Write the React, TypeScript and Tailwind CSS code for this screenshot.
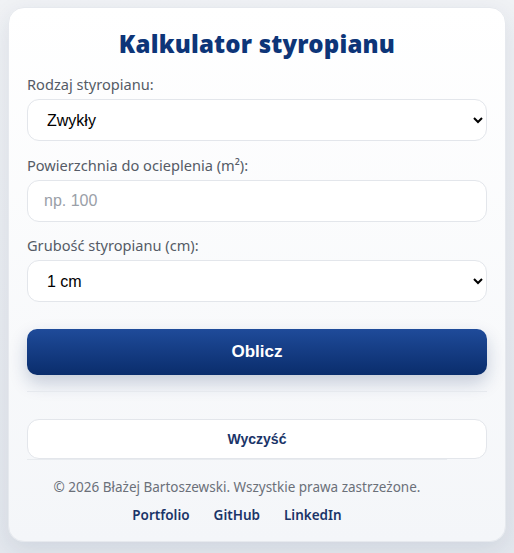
import React from 'react'

const sans = { fontFamily: '"Noto Sans", "Open Sans", sans-serif' }
const arial = { fontFamily: '"Liberation Sans", Arial, sans-serif' }

export default function App() {
  return (
    <div className="min-h-screen bg-gradient-to-b from-[#f0f2f5] to-[#e4e8ee] px-[8px] pt-[7px] pb-[13px]">
      <div
        className="rounded-[16px] bg-gradient-to-b from-white to-[#f4f6f9] px-[18px] pt-[20px] pb-[16px] shadow-[0_8px_24px_rgba(30,50,90,0.10)] border border-[#e6e9ee]"
        style={sans}
      >
        <h1 className="text-center text-[24px] leading-[32px] font-black text-[#0d3578] tracking-[0.2px]">
          Kalkulator styropianu
        </h1>

        <label className="mt-[14px] block text-[14.6px] leading-[20px] text-[#555b66]">Rodzaj styropianu:</label>
        <select
          defaultValue="zwykly"
          className="mt-[5px] block h-[42px] w-full rounded-[12px] border border-[#e3e6eb] bg-white pl-[15px] pr-[6px] text-[16px] text-black outline-none"
          style={arial}
        >
          <option value="zwykly">Zwykły</option>
          <option value="grafitowy">Grafitowy</option>
        </select>

        <label className="mt-[14px] block text-[14.6px] leading-[20px] text-[#555b66]">
          Powierzchnia do ocieplenia (m²):
        </label>
        <input
          type="number"
          placeholder="np. 100"
          className="mt-[5px] block h-[42px] w-full rounded-[12px] border border-[#e3e6eb] bg-white px-[16px] text-[16px] text-black outline-none placeholder:text-[#9aa0a8]"
          style={arial}
        />

        <label className="mt-[13px] block text-[14.6px] leading-[20px] text-[#555b66]">Grubość styropianu (cm):</label>
        <select
          defaultValue="1"
          className="mt-[5px] block h-[42px] w-full rounded-[12px] border border-[#e3e6eb] bg-white pl-[15px] pr-[6px] text-[16px] text-black outline-none"
          style={arial}
        >
          <option value="1">1 cm</option>
          <option value="2">2 cm</option>
          <option value="5">5 cm</option>
          <option value="10">10 cm</option>
        </select>

        <button
          className="mt-[27px] block h-[46px] w-full rounded-[10px] bg-gradient-to-b from-[#1f4b9a] to-[#0a2d6c] text-[17px] font-bold text-white shadow-[0_8px_18px_rgba(20,45,100,0.22)]"
          style={arial}
        >
          Oblicz
        </button>

        <div className="mt-[16px] h-px w-full bg-[#e6e9ee]" />

        <button
          className="mt-[27px] block h-[40px] w-full rounded-[12px] border border-[#e3e6eb] bg-white text-[14px] font-bold text-[#1a3468]"
          style={arial}
        >
          Wyczyść
        </button>

        <footer className="w-[420px] border-t border-[#e8ebef] pt-[17px]">
          <p className="text-center text-[13.5px] leading-[20px] text-[#6b7079]">
            © 2026 Błażej Bartoszewski. Wszystkie prawa zastrzeżone.
          </p>
          <div className="mt-[8px] flex justify-center gap-[24px] text-[13.5px] leading-[20px] font-semibold text-[#1a3468]">
            <a href="#">Portfolio</a>
            <a href="#">GitHub</a>
            <a href="#">LinkedIn</a>
          </div>
        </footer>
      </div>
    </div>
  )
}
